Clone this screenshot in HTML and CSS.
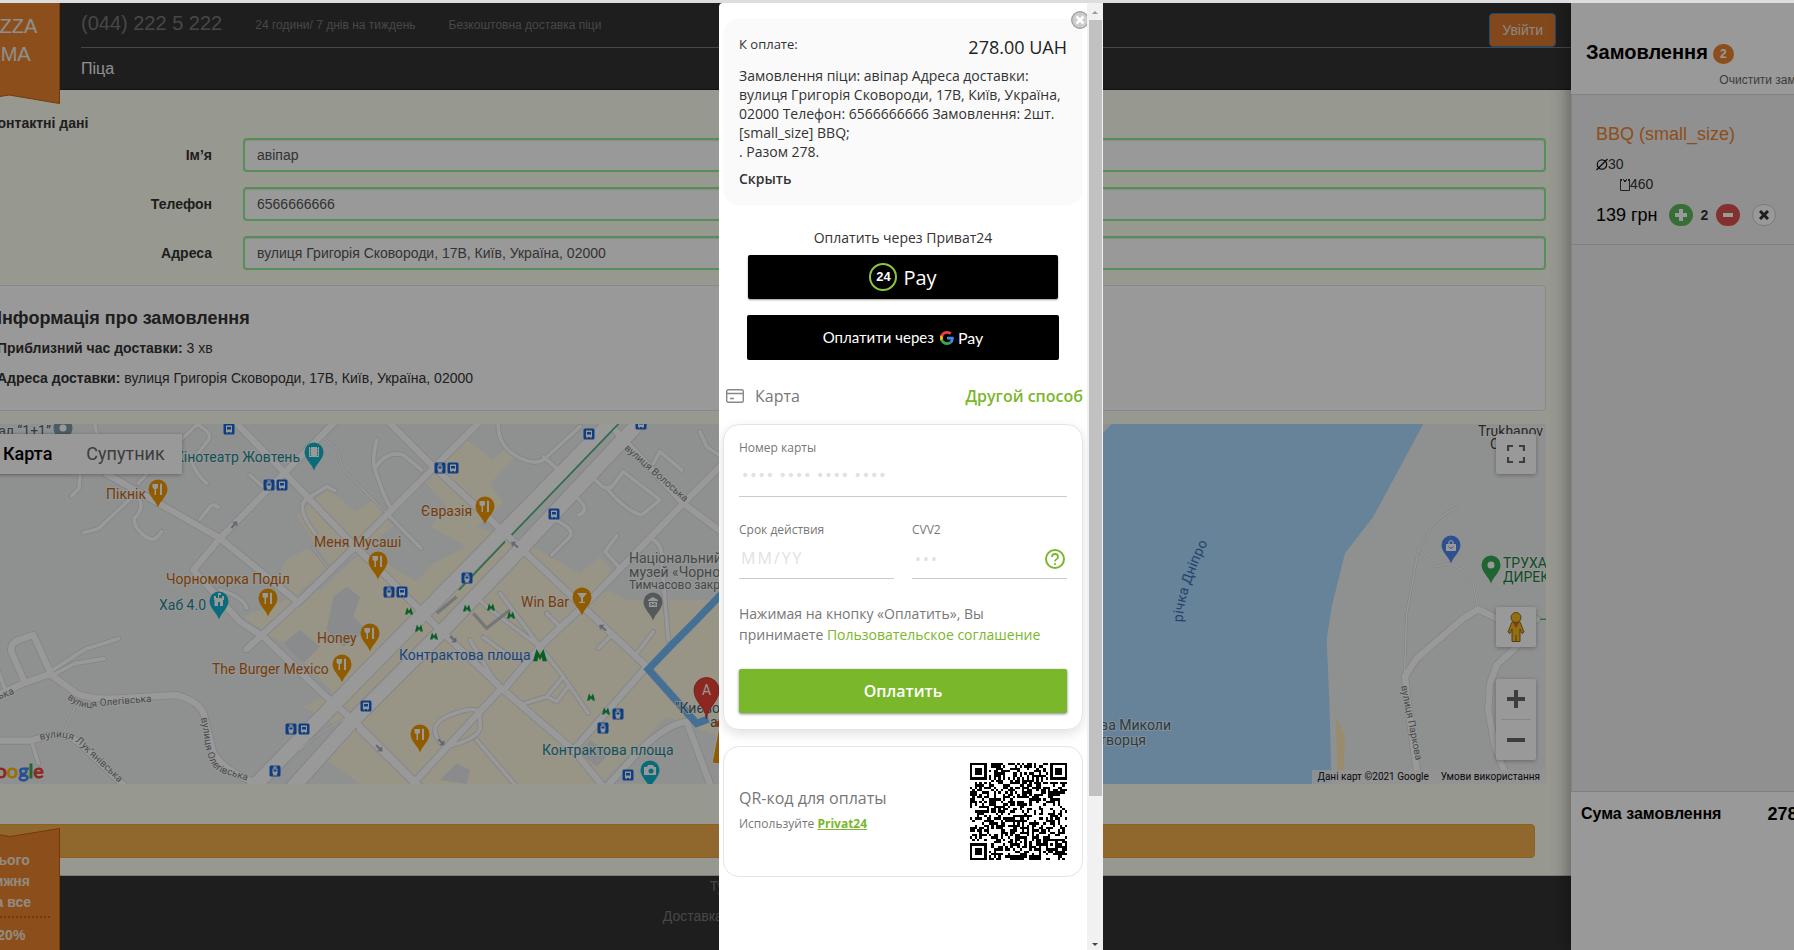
FILE: index.html
```html
<!DOCTYPE html>
<html lang="uk">
<head>
<meta charset="utf-8">
<title>Pizza KMA</title>
<link rel="stylesheet" href="styles.css">
</head>
<body>
<div class="stage">
  <div class="site">
    <div class="main">
      <header class="header">
        <div class="header-top">
          <span class="phone">(044) 222 5 222</span>
          <span class="note">24 години/ 7 днів на тиждень</span>
          <span class="note">Безкоштовна доставка піци</span>
          <button class="login" type="button">Увійти</button>
        </div>
        <nav class="nav"><a href="#pizza">Піца</a></nav>
      </header>
      <div class="ribbon ribbon-top">
        <svg class="ribbon-shape" viewBox="0 0 102 101" preserveAspectRatio="none"><path d="M0 0H102V100.500L51 92L0 100.500Z" fill="#e9842d"/><path d="M101.500 0V100.500L51 92L0 100.500" fill="none" stroke="#c65f0c"/></svg>
        <div class="ribbon-brand">PIZZA<br>KMA</div>
      </div>

      <main class="content">
        <form class="contact">
          <h2 class="contact-title">Контактні дані</h2>
          <div class="field"><label for="name">Ім’я</label><input id="name" value="авіпар"></div>
          <div class="field"><label for="tel">Телефон</label><input id="tel" value="6566666666"></div>
          <div class="field"><label for="addr">Адреса</label><input id="addr" value="вулиця Григорія Сковороди, 17В, Київ, Україна, 02000"></div>
        </form>
        <section class="info">
          <h3>Інформація про замовлення</h3>
          <p><b>Приблизний час доставки:</b> 3 хв</p>
          <p><b>Адреса доставки:</b> вулиця Григорія Сковороди, 17В, Київ, Україна, 02000</p>
        </section>

        <section class="map">
          <svg class="map-canvas" viewBox="-11 424 1557 360" preserveAspectRatio="xMinYMin slice">
            <defs>
              <g id="roads-wide">
                <path d="M750 1172L1000 915L1280 630L1510 395L1840 60"/>
                <path d="M880 1160L1060 960L1330 690L1540 470L1920 65"/>
              </g>
              <g id="roads-mid">
                <path d="M320 222L480 312L660 415L895 607L1065 440L1300 205L1440 65"/>
                <path d="M705 65L850 215L1065 440L1150 520L1310 680L1510 870L1720 1050L1810 1160"/>
                <path d="M1160 60L1300 200L1510 395L1780 650L1940 800L2080 960"/>
                <path d="M660 415L1005 65"/>
                <path d="M660 415L580 510L720 665L790 710L1000 910L1060 960L1260 1160"/>
                <path d="M740 747L895 605"/>
                <path d="M0 882L75 848L150 822L230 880Q270 898 340 896L530 885Q600 905 612 945L640 1060Q680 1120 775 1150"/>
                <path d="M0 1022H95Q190 985 240 1030L375 1160"/>
                <path d="M150 815L100 705L50 722Q25 740 38 765L75 848"/>
                <path d="M1510 870L1620 740L1780 590L2050 310L2170 190"/>
                <path d="M1840 85L2050 310L2170 400"/>
                <path d="M1240 1150L1500 870"/>
                <path d="M1080 990L1245 1150"/>
                <path d="M1720 1050L1940 800"/>
                <path d="M1820 1160L1930 1040Q2010 970 2060 965L2130 1152"/>
                <path d="M4215 830L4250 775L4390 655L4435 628L4490 655L4610 658"/>
                <path d="M4215 830L4222 900L4256 1152"/>
                <path d="M4550 740L4490 795L4470 850L4465 930L4485 1040L4528 1152"/>
              </g>
              <g id="roads-thin">
                <path d="M240 225L237 265L215 288"/><path d="M250 398L295 386L395 292"/>
                <path d="M420 300Q430 330 403 355Q400 380 430 405Q455 425 470 412L485 395"/>
                <path d="M600 358L630 320Q640 308 655 322"/>
                <path d="M415 250L480 180L600 65M590 72Q640 100 625 120L575 185Q590 225 620 250"/>
                <path d="M285 65Q285 110 310 130L370 180"/>
                <path d="M150 815L255 748L355 716"/><path d="M150 830L225 790L312 776"/>
                <path d="M20 880L-10 800"/><path d="M95 1025L115 1090"/>
                <path d="M660 570Q730 590 740 625"/><path d="M750 225L800 270"/>
                <path d="M945 400Q890 330 915 300L980 260L1005 272"/>
                <path d="M1130 120Q1115 180 1125 210L1150 280L1175 330M1125 205Q1160 150 1210 165L1265 210"/>
                <path d="M1160 340L1262 445"/>
                <path d="M1495 65Q1490 120 1530 155Q1590 200 1630 180L1740 80"/><path d="M1630 170L1670 205"/>
                <path d="M1770 225L1810 262H1835L1870 215L1980 300L1925 345Q1880 335 1820 265"/>
                <path d="M1715 280Q1780 330 1735 345"/><path d="M1655 355Q1740 390 1700 420L1655 465"/>
                <path d="M1850 407L1815 455L1860 505"/>
                <path d="M1950 415Q1990 430 1985 480L2005 720"/>
                <path d="M1500 580L1620 740L1690 830L1765 940"/><path d="M1420 580L1460 620L1620 740"/>
                <path d="M1575 910L1640 890L1690 830M1640 890L1670 905L1705 860"/>
                <path d="M1500 870L1410 720M1450 712L1530 770"/>
                <path d="M1640 640L1680 680"/><path d="M1795 745L1830 710"/><path d="M1910 760L1960 695"/>
                <path d="M1310 1010Q1290 970 1350 945Q1430 915 1440 940V985Q1430 1020 1340 1040Q1315 1030 1310 1010"/>
                <path d="M1430 1020L1550 1160"/>
                <path d="M1960 190L1980 155L2045 210"/><path d="M2100 95L2120 140L2165 170"/>
              </g>
              <g id="roads-path">
                <path d="M4370 322L4330 345L4300 372L4255 450L4220 640L4213 830"/>
                <path d="M4255 450L4305 500L4350 490L4395 515L4420 555L4435 630"/>
                <path d="M225 920L190 1000"/><path d="M960 105L1010 145L1030 210L1140 320"/>
                <path d="M935 440L985 505"/><path d="M1080 260L1160 340"/>
                <path d="M900 1050L960 1000L1060 940"/>
              </g>
              <g id="pin"><path d="M0 18.500C-2 12 -9.500 7 -9.500 0A9.500 9.500 0 0 1 9.500 0C9.500 7 2 12 0 18.500Z"/></g>
              <g id="fork"><path d="M-5.500 -5V-2Q-5.500 0 -3.500 0V6H-2V0Q0 0 0 -2V-5ZM2 -5V6H4V-5Q2.500 -6 2 -5Z" fill="#fff"/></g>
              <g id="bus"><rect x="-5.500" y="-5.500" width="11" height="11" rx="1.500" fill="#1a66d9"/><path d="M-3 -3.500H3V3H2.300V4.200H1.300V3H-1.300V4.200H-2.300V3H-3Z" fill="#fff"/><path d="M-2 -2H2V.5H-2Z" fill="#1a66d9"/></g>
              <g id="tram"><rect x="-5.500" y="-5.500" width="11" height="11" rx="1.500" fill="#1a66d9"/><path d="M-2 -4.500H2V-3.500H.5V-2.500H2.500V2.500L1.500 3L2.500 4.500H-2.500L-1.500 3L-2.500 2.500V-2.500H-.5V-3.500H-2Z" fill="#fff"/><path d="M-1.500 -1.500H1.500V.5H-1.500Z" fill="#1a66d9"/></g>
              <path id="metro" d="M-4 3.500L-2 -3.500L0 0L2 -3.500L4 3.500H1.500L1 1L0 3L-1 1L-1.500 3.500Z" fill="#0a9d3a"/>
              <path id="arrow" d="M-4 -1H1V-3.500L5 0L1 3.500V1H-4Z" fill="#a9adbd"/>
            </defs>
            <rect x="-11" y="424" width="1700" height="360" fill="#eff2f1"/>
            <g transform="translate(0 400) scale(.333333)">
              <path fill="#fef7e0" d="M890 345L985 270L1070 335L1120 300L1180 380L1000 510L950 440ZM860 480L920 445L985 500L890 585L830 540ZM815 710L730 650L880 590L960 570L1070 470L1110 460L1250 545L1300 490L1400 440L1290 380L1340 320L1270 240L1400 120L1480 180L1520 140L1550 165L1470 250L1510 310L1430 380L1560 420L1740 520L1800 470L1850 530L1820 570L1880 600L2160 600V1010L2000 950L1800 1152H1080L980 1080L1050 1000L910 920L1000 880L870 740Z"/>
              <path fill="#e6e8ec" d="M1000 590L1040 560L1080 590L1060 650L1100 690L1030 740L980 690ZM850 730L900 690L960 740L910 790ZM1320 1140L1370 1090L1410 1110L1400 1152ZM1770 1020L1830 1060L1790 1100L1740 1060Z"/>
              <path fill="#aadaff" d="M3335 72H4270L4120 350L4035 460L3995 620L3980 720L3988 900L3995 1152H2900L3270 140Z"/>
              <path fill="#fdeab5" d="M4007 950L4035 1005L4032 1115H4012Z"/>
              <g class="roads">
                <use href="#roads-path" class="casing w-path"/><use href="#roads-thin" class="casing w-thin"/><use href="#roads-mid" class="casing w-mid"/><use href="#roads-wide" class="casing w-wide"/>
                <use href="#roads-path" class="fill w-path"/><use href="#roads-thin" class="fill w-thin"/><use href="#roads-mid" class="fill w-mid"/><use href="#roads-wide" class="fill w-wide"/>
              </g>
              <path d="M1855 72L1535 405M1515 425L1377 570" stroke="#4bb577" stroke-width="5" fill="none"/>
              <path d="M1420 640L1460 685L1530 630M1310 640L1370 590" stroke="#c3c5c9" stroke-width="10" fill="none"/>
              <path d="M2200 545L2080 670L2010 740L1945 808L2090 970L2125 957" stroke="#74bbfb" stroke-width="22" fill="none"/>
              <path d="M4620 658H4650" stroke="#4bb577" stroke-width="4"/>
            </g>
            <use href="#arrow" transform="translate(234 525) rotate(-50)"/><use href="#arrow" transform="translate(515 545) rotate(-140)"/><use href="#arrow" transform="translate(603 628) rotate(-140)"/><use href="#arrow" transform="translate(453 639) rotate(45)"/><use href="#arrow" transform="translate(379 748) rotate(45)"/><use href="#arrow" transform="translate(441 742) rotate(45)"/>

            <g fill="#f29900"><use href="#pin" x="158" y="489"/><use href="#pin" x="485" y="506"/><use href="#pin" x="378" y="561"/><use href="#pin" x="268" y="598"/><use href="#pin" x="370" y="633"/><use href="#pin" x="342" y="664"/><use href="#pin" x="582" y="597"/><use href="#pin" x="420" y="734"/></g>
            <use href="#fork" x="158" y="489"/><use href="#fork" x="485" y="506"/><use href="#fork" x="378" y="561"/><use href="#fork" x="268" y="598"/><use href="#fork" x="370" y="633"/><use href="#fork" x="342" y="664"/><use href="#fork" x="420" y="734"/>
            <path d="M577 593H587L583 598V602H585V603H579V602H581V598Z" fill="#fff"/>
            <g fill="#12b5cb"><use href="#pin" x="314" y="452"/><use href="#pin" x="219" y="601"/><use href="#pin" x="650" y="770"/></g>
            <path d="M309 447H319V457H309Z" fill="#fff"/><path d="M310.500 447V457M317.500 447V457" stroke="#12b5cb" stroke-dasharray="1.500 1"/>
            <path d="M214 596H216V598H218V593H221V595H219V598H222V596H224V600H223V606H214.500V600H214Z" fill="#fff"/><path d="M218 602H220V606H218Z" fill="#12b5cb"/>
            <path d="M644 767H647L648 765H653L654 767H656V775H644Z" fill="#fff"/><circle cx="651" cy="771" r="2.500" fill="#12b5cb"/>
            <use href="#pin" x="63" y="428" fill="#7f9aa5"/><circle cx="63" cy="428" r="3.500" fill="#fff"/>
            <use href="#pin" x="653" y="602" fill="#909499"/><path d="M653 597L658 600V601H648V600ZM649 602H657V607H649Z" fill="#fff"/><path d="M651 606V603L653 605L655 603V606" fill="none" stroke="#909499"/>
            <use href="#pin" x="1451" y="545" fill="#4f86ef"/><path d="M1446 544H1456V551H1446Z" fill="#fff"/><path d="M1449 544V542Q1451 539 1453 542V544" stroke="#fff" fill="none" stroke-width="1.200"/><path d="M1448.500 546.500Q1451 550 1453.500 546.500" stroke="#4f86ef" fill="none"/>
            <use href="#pin" x="1491" y="565" fill="#34a853"/><circle cx="1491" cy="565" r="3.500" fill="#fff"/>
            <use href="#bus" x="229" y="429"/><use href="#tram" x="269" y="485"/><use href="#bus" x="282" y="485"/><use href="#tram" x="440" y="468"/><use href="#bus" x="453" y="468"/><use href="#bus" x="589" y="434"/><use href="#bus" x="641" y="424"/><use href="#bus" x="554" y="514"/><use href="#tram" x="467" y="578"/><use href="#tram" x="389" y="592"/><use href="#bus" x="402" y="592"/><use href="#bus" x="366" y="706"/><use href="#tram" x="291" y="729"/><use href="#bus" x="304" y="729"/><use href="#tram" x="275" y="771"/><use href="#tram" x="618" y="714"/><use href="#tram" x="603" y="728"/><use href="#bus" x="628" y="775"/>
            <use href="#metro" x="409" y="611"/><use href="#metro" x="419" y="628"/><use href="#metro" x="434" y="636"/><use href="#metro" x="467" y="608"/><use href="#metro" x="491" y="607"/><use href="#metro" x="511" y="615"/><use href="#metro" x="591" y="697"/><use href="#metro" x="606" y="711"/>
            <use href="#metro" transform="translate(540 655) scale(1.750)"/>

            <g class="place food">
              <text x="106" y="499">Пікнік</text><text x="421" y="516">Євразія</text><text x="314" y="547">Меня Мусаші</text><text x="166" y="584">Чорноморка Поділ</text><text x="317" y="643">Honey</text><text x="212" y="674">The Burger Mexico</text><text x="521" y="607">Win Bar</text>
            </g>
            <g class="place culture"><text x="300" y="462" text-anchor="end">Кінотеатр Жовтень</text><text x="159" y="610">Хаб 4.0</text><text x="542" y="755">Контрактова площа</text></g>
            <g class="place station"><text x="399" y="660">Контрактова площа</text></g>
            <g class="place grey"><text x="629" y="563">Національний</text><text x="629" y="577">музей «Чорнобиль»</text><text class="small" x="629" y="589">Тимчасово закрито</text></g>
            <g class="place slate"><text x="51" y="436" text-anchor="end">канал “1+1”</text><text x="675" y="713">"Києво-Моги</text><text x="710" y="727">ака</text><text x="1171" y="730" text-anchor="end">церква Миколи</text><text x="1146" y="745" text-anchor="end">Чудотворця</text></g>
            <g class="place park"><text x="1503" y="568">ТРУХАНІВ</text><text x="1503" y="582">ДИРЕКЦІЯ</text></g>
            <g class="place dark"><text x="1478" y="436">Trukhanov</text><text x="1490" y="449">Ostrov</text></g>
            <path d="M720 722H726V765L712 763Z" fill="#f29900" stroke="#fff"/><circle cx="718" cy="724" r="3" fill="#f0601a"/>
            <path d="M706.500 719C705 706 694 702 694 690A12.500 12.500 0 0 1 719 690C719 702 708 706 706.500 719Z" fill="#ea4335" stroke="#b5302a" stroke-width=".8"/>
            <text x="706.500" y="695" text-anchor="middle" class="marker">A</text>

            <path id="s1" d="M67 698Q82 712 100 706L160 701" fill="none"/><path id="s2" d="M40 740Q72 732 84 750Q104 768 120 784" fill="none"/><path id="s3" d="M201 718C206 738 203 765 222 773L252 782" fill="none"/><path id="s4" d="M624 449L690 507" fill="none"/><path id="s5" d="M1401 686L1418 772" fill="none"/><path id="s6" d="M-34 712L24 690" fill="none"/><path id="s7" d="M1183 622C1182 600 1198 560 1214 530" fill="none"/>
            <g class="street"><text><textPath href="#s1">вулиця Олегівська</textPath></text><text><textPath href="#s2">вулиця Лук’янівська</textPath></text><text><textPath href="#s3">вулиця Олегівська</textPath></text><text><textPath href="#s4">вулиця Волоська</textPath></text><text><textPath href="#s5">вулиця Паркова</textPath></text><text><textPath href="#s6">Олегівська</textPath></text></g>
            <text class="river"><textPath href="#s7">річка Дніпро</textPath></text>
          </svg>
          <div class="map-types"><button type="button" class="on">Карта</button><button type="button">Супутник</button></div>
          <button type="button" class="map-btn map-full" aria-label="На весь екран"><svg width="18" height="18" viewBox="0 0 18 18"><path d="M1 6V1H6M12 1H17V6M17 12V17H12M6 17H1V12" fill="none" stroke="#666" stroke-width="2.200"/></svg></button>
          <div class="map-tools">
            <button type="button" class="map-btn" aria-label="Перегляд вулиць"><svg width="18" height="32" viewBox="0 0 18 32"><path d="M5 11H13L17 21L15 22.500L13 18V30.500H5V18L3 22.500L1 21Z" fill="#f5b921" stroke="#8f6a15"/><circle cx="9" cy="6.500" r="5" fill="#f5b921" stroke="#8f6a15"/><path d="M6 12H12L9 17Z" fill="#d5672a"/><path d="M9 24V30" stroke="#8f6a15"/></svg></button>
            <div class="map-zoom">
              <button type="button" aria-label="Збільшити"><svg width="18" height="18"><path d="M9 0V18M0 9H18" stroke="#666" stroke-width="4"/></svg></button>
              <button type="button" aria-label="Зменшити"><svg width="18" height="18"><path d="M0 9H18" stroke="#666" stroke-width="4"/></svg></button>
            </div>
          </div>
          <div class="map-logo"><span class="b">G</span><span class="r">o</span><span class="y">o</span><span class="b">g</span><span class="g">l</span><span class="r">e</span></div>
          <div class="map-legal"><span>Дані карт ©2021 Google</span><a href="#terms">Умови використання</a></div>
        </section>
        <button class="submit" type="button" aria-label="Замовити"></button>
      </main>
      <footer class="footer"><p>Тут найсмачніша</p><p>Доставка піци по всьому Києву.</p></footer>
      <div class="ribbon ribbon-bottom">
        <svg class="ribbon-shape" viewBox="0 0 102 122" preserveAspectRatio="none"><path d="M0 .5L52 8.500L102 .5V122H0Z" fill="#e9842d"/><path d="M0 .5L52 8.500L101.500 .5V122" fill="none" stroke="#c65f0c"/></svg>
        <div class="promo"><p>Цього<br>тижня<br>на все</p><strong>-20%</strong></div>
      </div>
    </div>

    <aside class="cart">
      <div class="cart-head">
        <h2>Замовлення <span class="badge">2</span></h2>
        <a href="#clear">Очистити замовлення</a>
      </div>
      <div class="cart-items">
        <article class="item">
          <h3>BBQ (small_size)</h3>
          <p class="spec"><svg width="12" height="13" viewBox="0 0 12 13"><circle cx="6" cy="6.500" r="4.700" fill="none" stroke="#111" stroke-width="1.200"/><path d="M.5 12L11.500 1" stroke="#111" stroke-width="1.200"/></svg>30</p>
          <p class="spec weight"><svg width="10" height="13" viewBox="0 0 10 13"><path d="M.5 3V12.500H9.500V3" fill="none" stroke="#333"/><path d="M0 1H2V3H0ZM8 1H10V3H8ZM3 1H4V2H6V1H7V2L6 3V4H4V3L3 2Z" fill="#333"/></svg>460</p>
          <div class="qty">
            <span class="price">139 грн</span>
            <button type="button" class="round plus" aria-label="Додати"><svg width="12" height="12"><path d="M6 0V12M0 6H12" stroke="#fff" stroke-width="4"/></svg></button>
            <b>2</b>
            <button type="button" class="round minus" aria-label="Відняти"><svg width="12" height="12"><path d="M1 6H11" stroke="#fff" stroke-width="4"/></svg></button>
            <button type="button" class="round drop" aria-label="Прибрати"><svg width="10" height="10"><path d="M1 1L9 9M9 1L1 9" stroke="#333" stroke-width="3"/></svg></button>
          </div>
        </article>
      </div>
      <div class="total"><span>Сума замовлення</span><span class="sum">278 грн</span></div>
    </aside>
  </div>
  <div class="backdrop"></div>

  <div class="dialog" role="dialog" aria-label="Оплата">
    <div class="pay">
      <section class="summary">
        <div class="summary-row"><span>К оплате:</span><strong>278.00 UAH</strong></div>
        <p>Замовлення піци: авіпар Адреса доставки: вулиця Григорія Сковороди, 17В, Київ, Україна, 02000 Телефон: 6566666666 Замовлення: 2шт. [small_size] BBQ;<br>. Разом 278.</p>
        <a href="#hide">Скрыть</a>
      </section>
      <div class="wallets">
        <span>Оплатить через Приват24</span>
        <button type="button" class="p24"><i>24</i>Pay</button>
        <button type="button" class="gpay">Оплатити через <svg width="14" height="14" viewBox="0 0 48 48"><path fill="#ea4335" d="M24 9.500c3.540 0 6.710 1.220 9.210 3.600l6.850-6.850C35.900 2.380 30.470 0 24 0 14.620 0 6.510 5.380 2.560 13.220l7.980 6.190C12.430 13.720 17.740 9.500 24 9.500z"/><path fill="#4285f4" d="M46.980 24.550c0-1.570-.15-3.090-.38-4.550H24v9.020h12.940c-.58 2.960-2.260 5.480-4.780 7.180l7.730 6c4.510-4.180 7.090-10.360 7.090-17.650z"/><path fill="#fbbc05" d="M10.530 28.590c-.48-1.450-.76-2.990-.76-4.590s.27-3.140.76-4.590l-7.980-6.190C.92 16.460 0 20.120 0 24c0 3.880.92 7.540 2.560 10.780l7.970-6.190z"/><path fill="#34a853" d="M24 48c6.480 0 11.930-2.130 15.890-5.810l-7.730-6c-2.150 1.450-4.920 2.300-8.160 2.300-6.260 0-11.570-4.220-13.470-9.910l-7.980 6.190C6.510 42.620 14.620 48 24 48z"/></svg><span>Pay</span></button>
      </div>
      <div class="method">
        <svg width="18" height="14" viewBox="0 0 18 14"><rect x=".7" y=".7" width="16.600" height="12.600" rx="1.500" fill="none" stroke="#888" stroke-width="1.400"/><path d="M1 4.500H17M4 9.500H8" stroke="#888" stroke-width="1.400"/></svg>
        <span>Карта</span><a href="#other">Другой способ</a>
      </div>
      <form class="card">
        <div class="cell"><label for="pan">Номер карты</label><input id="pan" class="pan" placeholder="•••• •••• •••• ••••"></div>
        <div class="pair">
          <div class="cell"><label for="exp">Срок действия</label><input id="exp" class="exp" placeholder="MM/YY"></div>
          <div class="cell"><label for="cvv">CVV2</label><input id="cvv" class="cvv" placeholder="•••">
            <svg class="help" width="22" height="22" viewBox="0 0 22 22"><circle cx="11" cy="11" r="9" fill="none" stroke="#7ab72b" stroke-width="2"/><path d="M8 9Q8 6 11 6T14 9Q14 10.500 12.500 11.300Q11 12 11 13.500" fill="none" stroke="#7ab72b" stroke-width="1.800"/><circle cx="11" cy="16" r="1.100" fill="#7ab72b"/></svg>
          </div>
        </div>
        <p>Нажимая на кнопку «Оплатить», Вы принимаете <a href="#agreement">Пользовательское соглашение</a></p>
        <button type="button">Оплатить</button>
      </form>
      <section class="qr-box">
        <div><h4>QR-код для оплаты</h4><p>Используйте <a href="#privat24">Privat24</a></p></div>
        <svg class="qr" viewBox="0 0 41 41" shape-rendering="crispEdges" role="img" aria-label="QR"><path id="qr-modules"/></svg>
      </section>
    </div>
    <div class="scroll"><span class="tri up"></span><span class="thumb"></span><span class="tri down"></span></div>
    <button type="button" class="close" aria-label="Закрыть"><svg width="18" height="18" viewBox="0 0 18 18"><circle cx="9" cy="9" r="8.300" fill="#ccc" stroke="#999" stroke-width="1.200"/><path d="M5.500 5.500L12.500 12.500M12.500 5.500L5.500 12.500" stroke="#fff" stroke-width="2.600"/></svg></button>
  </div>
</div>
<script src="qr.js"></script>
</body>
</html>
```
FILE: styles.css
```css
* { box-sizing: border-box; }
body { margin: 0; min-height: 100vh; display: flex; flex-direction: column; background: #fff; border-top: 3px solid #dcdde0; font: 14px/20px "Liberation Sans", Arial, sans-serif; color: #333; overflow: hidden; }
h2, h3, h4, p { margin: 0; }
button, input { font: inherit; margin: 0; }
button { cursor: pointer; border: 0; padding: 0; }
a { text-decoration: none; color: inherit; }

/* The shop is wider than the window and scrolled a little to the right */
.stage { flex: 1; display: flex; position: relative; margin: 0 -70px 0 -42px; }
.site { flex: 1; display: flex; min-width: 0; }
.backdrop { position: absolute; inset: 0; background: rgba(0, 0, 0, .4); }

.main { flex: 1; min-width: 0; display: flex; flex-direction: column; position: relative; background: #fcfdf0; }
.header { background: #333; padding-left: 123px; color: #777; border-bottom: 1px solid #222; }
.header-top { display: flex; align-items: flex-start; height: 45px; border-bottom: 1px solid #777; padding: 10px 15px 0 0; }
.phone { font-size: 20px; margin-right: 33px; }
.note { font-size: 12px; margin-right: 33px; padding-top: 2px; }
.login { margin-left: auto; height: 34px; padding: 0 12px; background: #d9782d; border: 1px solid #337ab7; border-radius: 4px; color: #e9e2da; }
.nav { padding: 11px 0 10px; font-size: 16px; color: #eee; }

.ribbon { position: absolute; left: 0; width: 102px; text-align: center; color: #fff; }
.ribbon-top { top: 0; height: 101px; }
.ribbon-bottom { bottom: 0; height: 122px; }
.ribbon-shape { position: absolute; inset: 0; width: 100%; height: 100%; }
.ribbon-brand { position: relative; padding-top: 9px; font-size: 20px; line-height: 28px; color: #eee; }
.promo { position: relative; padding: 22px 10px 0; font-weight: bold; line-height: 21px; color: #f4e8da; }
.promo p { padding-bottom: 3px; border-bottom: 2px dotted #c65f0c; }
.promo strong { display: block; padding-top: 7px; }

.content { padding: 23px 25px 17px 31px; display: flex; flex-direction: column; }
.contact { display: grid; gap: 15px; }
.contact-title { font-size: 14px; line-height: 20px; margin-bottom: -10px; }
.field { display: grid; grid-template-columns: 223px 1fr; gap: 31px; align-items: center; }
.field label { font-weight: bold; text-align: right; }
.field input { width: 100%; height: 34px; padding: 0 12px; border: 2px solid #90ee90; border-radius: 4px; background: #fff; color: #555; box-shadow: inset 0 1px 1px rgba(0, 0, 0, .1); }
.info { margin-top: 15px; padding: 22px 7px; background: #fff; border: 1px solid #e3e3e3; border-radius: 4px; display: grid; gap: 10px; }
.info h3 { font-size: 18px; line-height: 20px; }

.map { position: relative; margin-top: 13px; height: 360px; overflow: hidden; font-family: Roboto, sans-serif; }
.map-canvas { display: block; width: 100%; height: 100%; }
.roads { fill: none; stroke-linecap: round; stroke-linejoin: round; }
.casing { stroke: #dadce1; }
.fill { stroke: #fff; }
.casing.w-path { stroke-width: 8px; } .fill.w-path { stroke-width: 4px; }
.casing.w-thin { stroke-width: 16px; } .fill.w-thin { stroke-width: 11px; }
.casing.w-mid { stroke-width: 24px; } .fill.w-mid { stroke-width: 19px; }
.casing.w-wide { stroke-width: 48px; } .fill.w-wide { stroke-width: 42px; }
.map text { paint-order: stroke; stroke: #fff; stroke-opacity: .6; stroke-width: 2px; }
.place { font-size: 14px; }
.place .small { font-size: 12px; }
.food { fill: #c5670c; } .culture { fill: #1c8791; } .station { fill: #3071c9; } .grey { fill: #75797e; } .slate { fill: #4a6670; } .park { fill: #1a7f3c; } .dark { fill: #444; }
.street { font-size: 10px; fill: #777b80; }
.map .river { font-size: 14px; fill: #3f6fb5; stroke: none; }
.map .marker { font-size: 14px; fill: #fff; stroke: none; }
.map button { background: #fff; color: #666; }
.map-types { position: absolute; top: 10px; left: 0; display: flex; height: 40px; box-shadow: 0 1px 4px rgba(0, 0, 0, .3); border-radius: 2px; }
.map-types button { padding: 0 17px; font-size: 18px; }
.map-types .on { padding: 0 17px 0 14px; color: #000; font-weight: 500; box-shadow: 1px 0 2px rgba(0, 0, 0, .2); }
.map-btn, .map-zoom { width: 40px; border-radius: 2px; box-shadow: 0 1px 4px rgba(0, 0, 0, .3); }
.map-btn { height: 40px; display: grid; place-items: center; }
.map-full { position: absolute; top: 10px; right: 10px; }
.map-tools { position: absolute; right: 10px; bottom: 24px; display: grid; gap: 32px; }
.map-zoom { background: #fff; }
.map-zoom button { display: grid; place-items: center; width: 30px; margin: 0 5px; height: 40px; }
.map-zoom button + button { border-top: 1px solid #e0e0e0; height: 41px; }
.map-logo { position: absolute; left: -8px; bottom: 2px; font: 20px/24px Lato, sans-serif; -webkit-text-stroke: 1px; }
.map-logo .b { color: #4285f4; } .map-logo .r { color: #ea4335; } .map-logo .y { color: #fbbc05; } .map-logo .g { color: #34a853; }
.map-legal { position: absolute; right: 0; bottom: 0; padding: 0 6px 0 5px; background: rgba(245, 245, 245, .8); font-size: 10px; line-height: 14px; color: #111; display: flex; gap: 12px; }
.submit { margin: 40px 11px 0 0; height: 34px; background: #f0ad4e; border: 1px solid #eea236; border-radius: 4px; }
.footer { flex: 1; background: #333; border-top: 1px solid #ccc; color: #777; text-align: center; display: grid; align-content: start; gap: 10px; min-height: 74px; }

.cart { width: 293px; position: relative; display: flex; flex-direction: column; background: #f1f1f1; box-shadow: 0 0 18px rgba(0, 0, 0, .45); color: #000; }
.cart-head { height: 92px; padding: 37px 22px 0 15px; background: #fff; border-bottom: 1px solid #d5d5d5; text-align: right; }
.cart-head h2 { font-size: 20px; line-height: 24px; display: flex; align-items: center; gap: 5px; margin-bottom: 5px; }
.cart-head a { font-size: 12px; color: #666; }
.badge { background: #e9842d; color: #fff; font-size: 12px; line-height: 20px; width: 21px; border-radius: 10px; text-align: center; margin-top: 4px; }
.cart-items { flex: 1; border-left: 1px solid #ddd; }
.item { padding: 27px 26px 18px 24px; border-bottom: 1px solid #d5d5d5; }
.item h3 { font-size: 18px; font-weight: normal; color: #e9842d; line-height: 24px; margin-bottom: 8px; }
.spec { display: flex; align-items: center; line-height: 20px; color: #333; }
.weight { padding-left: 24px; }
.qty { display: flex; align-items: center; line-height: 22px; margin-top: 10px; }
.price { font-size: 18px; margin-right: 11px; }
.qty b { margin: 0 8px; color: #333; }
.round { width: 24px; height: 22px; border-radius: 11px; display: grid; place-items: center; }
.plus { background: #5cb85c; } .minus { background: #d9534f; } .drop { background: #fff; border: 1px solid #ccc; margin-left: 12px; }
.total { height: 159px; border-top: 1px solid #d5d5d5; background: #fff; display: flex; justify-content: space-between; padding: 12px 32px 0 10px; font-size: 16px; font-weight: bold; }
.total .sum { font-size: 18px; }

.dialog { position: absolute; inset: 0 auto 0 50%; margin-left: -192px; width: 384px; display: flex; background: #fff; border-radius: 4px 0 0 0; overflow: hidden; font-family: "Open Sans", "Noto Sans", sans-serif; }
.pay { flex: 1; padding: 16px 4px; color: #333; line-height: 19px; }
.summary { background: #fafafa; border-radius: 16px; padding: 16px 16px 17px; display: grid; gap: 8px; }
.summary-row { display: flex; justify-content: space-between; height: 23px; font-size: 13px; }
.summary-row strong { font-size: 18px; font-weight: 500; line-height: 24px; color: #222; }
.summary a { font-weight: 600; }
.wallets { margin-top: 23px; display: flex; flex-direction: column; align-items: center; }
.wallets button { background: #000; color: #fff; border-radius: 2px; display: flex; align-items: center; justify-content: center; gap: 6px; }
.p24 { width: 310px; height: 44px; margin: 8px 0 16px; font-size: 20px; box-shadow: 0 1px 2px rgba(0, 0, 0, .4); }
.p24 i { width: 28px; height: 28px; border: 2px solid #8cc63f; border-radius: 50%; font: bold 13px/24px "Liberation Sans", sans-serif; }
.gpay { width: 312px; height: 45px; font-family: Lato, "Open Sans", sans-serif; font-size: 15px; }
.gpay span { font-size: 16px; margin-left: -2px; }
.method { display: flex; align-items: center; margin: 24px 0 16px; padding-left: 3px; height: 24px; font-size: 16px; color: #777; }
.method svg { margin-right: 11px; }
.method span { font-weight: 500; }
.method a { margin-left: auto; color: #7ab72b; font-weight: 600; }
.card, .qr-box { border: 1px solid #dfe4ee; border-radius: 16px; padding: 14px 15px 16px; }
.card { display: flex; flex-direction: column; gap: 24px; box-shadow: 0 4px 12px rgba(0, 0, 0, .12); color: #777; }
.cell { position: relative; }
.cell label { display: block; font-size: 12px; line-height: 18px; }
.cell input { display: block; width: 100%; height: 40px; padding: 0 2px 2px; border: 0; border-bottom: 1px solid #ccc; background: none; font-size: 16px; letter-spacing: 2px; color: #333; }
.cell .pan { font: 14px "DejaVu Sans", sans-serif; letter-spacing: 0; padding-bottom: 4px; }
.cell .cvv { padding: 0 3px; }
.cell input::placeholder { color: #dfe1e7; opacity: 1; }
.cell .exp::placeholder { font-weight: 500; }
.pair { display: grid; grid-template-columns: 1fr 1fr; gap: 18px; }
.help { position: absolute; right: 1px; bottom: 9px; }
.card p { line-height: 21px; }
.card p a { color: #7ab72b; }
.card button { height: 44px; background: #7ab72b; color: #fff; font-size: 16px; font-weight: 600; border-radius: 2px; box-shadow: 0 1px 3px rgba(0, 0, 0, .5); }
.qr-box { margin-top: 16px; display: flex; justify-content: space-between; align-items: center; padding: 16px 15px; color: #777; }
.qr-box h4 { font-size: 16px; font-weight: 500; line-height: 24px; margin-bottom: 4px; }
.qr-box p { font-size: 12px; line-height: 20px; padding-bottom: 4px; }
.qr-box a { color: #7ab72b; font-weight: 700; text-decoration: underline; }
.qr { width: 97px; height: 97px; display: block; }
.scroll { width: 16px; background: #f1f1f1; display: flex; flex-direction: column; align-items: center; position: relative; z-index: 1; padding: 8px 0 4px; }
.thumb { width: 13px; height: 83%; background: #c1c1c1; margin: 6px 0 auto; }
.tri { border: 3px solid transparent; }
.up { border-top: 0; border-bottom-color: #999; }
.down { border-bottom: 0; border-top-color: #444; }
.close { position: absolute; top: 8px; right: 14px; background: none; line-height: 0; }
```
FILE: qr.js
```javascript
// Fills the 41x41 code: finder marks, alignment mark, timing lines and data modules
const size = 41;
let seed = 20211;
const next = () => (seed = (seed * 1103515245 + 12345) % 2147483648) / 2147483648;
const ring = (x, y, cx, cy) => Math.max(Math.abs(x - cx), Math.abs(y - cy));
let d = '';
for (let y = 0; y < size; y++) {
  for (let x = 0; x < size; x++) {
    let on = next() < 0.5;
    if (x === 6 || y === 6) on = (x + y) % 2 === 0;
    const a = ring(x, y, 34, 34);
    if (a <= 2) on = a !== 1;
    for (const [cx, cy] of [[3, 3], [37, 3], [3, 37]]) {
      const r = ring(x, y, cx, cy);
      if (r <= 4) on = r === 3 || r <= 1;
    }
    if (on) d += `M${x} ${y}h1v1h-1z`;
  }
}
document.getElementById('qr-modules').setAttribute('d', d);
```
